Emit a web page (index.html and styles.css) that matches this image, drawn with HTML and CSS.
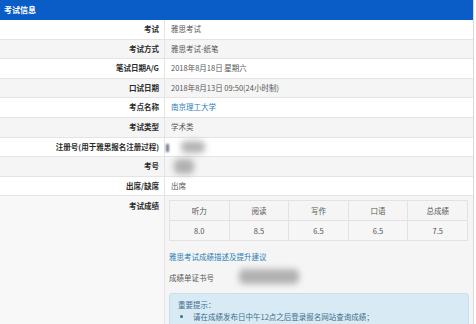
FILE: index.html
```html
<!DOCTYPE html>
<html lang="zh-CN">
<head>
    <meta charset="UTF-8">
    <title>考试信息</title>
    <link rel="stylesheet" href="styles.css">
</head>
<body>
    <div class="panel">
        <div class="panel-header">考试信息</div>

        <div class="row"><div class="label">考试</div><div class="value">雅思考试</div></div>
        <div class="row"><div class="label">考试方式</div><div class="value">雅思考试-纸笔</div></div>
        <div class="row"><div class="label">笔试日期A/G</div><div class="value">2018年8月18日 星期六</div></div>
        <div class="row"><div class="label">口试日期</div><div class="value">2018年8月13日 09:50(24小时制)</div></div>
        <div class="row"><div class="label">考点名称</div><div class="value"><a href="#" class="link">南京理工大学</a></div></div>
        <div class="row"><div class="label">考试类型</div><div class="value">学术类</div></div>
        <div class="row"><div class="label">注册号(用于雅思报名注册过程)</div><div class="value"><span class="mark"></span><span class="blur blur-reg"></span></div></div>
        <div class="row"><div class="label">考号</div><div class="value"><span class="blur blur-id"></span></div></div>
        <div class="row"><div class="label">出席/缺席</div><div class="value">出席</div></div>

        <div class="row row-score">
            <div class="label">考试成绩</div>
            <div class="value">
                <table class="scores">
                    <tr><td>听力</td><td>阅读</td><td>写作</td><td>口语</td><td>总成绩</td></tr>
                    <tr class="nums"><td>8.0</td><td>8.5</td><td>6.5</td><td>6.5</td><td>7.5</td></tr>
                </table>

                <a href="#" class="link desc-link">雅思考试成绩描述及提升建议</a>

                <div class="cert">
                    <span>成绩单证书号</span>
                    <span class="blur blur-cert"></span>
                </div>

                <div class="alert">
                    <div>重要提示：</div>
                    <ul>
                        <li>请在成绩发布日中午12点之后登录报名网站查询成绩；</li>
                    </ul>
                </div>
            </div>
        </div>
    </div>
</body>
</html>
```

FILE: styles.css
```css
/* Global */
body {
    margin: 0;
    font-family: "Noto Sans CJK SC", "Liberation Sans", sans-serif;
    font-size: 7.5px;
    color: #555;
    background-color: #fff;
    overflow: hidden;
    height: 324px;
}

/* Panel */
.panel {
    width: 473px;
    border-right: 1px solid #d8d8d8;
}

.panel-header {
    height: 20px;
    line-height: 20px;
    padding-left: 4px;
    background-color: #0a5cc6;
    color: #fff;
    font-size: 8px;
    font-weight: bold;
}

/* Rows */
.row {
    display: grid;
    grid-template-columns: 165px 1fr;
    height: 19.6px;
    border-bottom: 1px solid #e4e4e4;
    box-sizing: border-box;
    line-height: 18.6px;
}

.row:nth-of-type(odd) {
    background-color: #f5f5f5;
}

.label {
    text-align: right;
    padding-right: 5px;
    font-weight: bold;
    color: #2a2a2a;
    border-right: 1px solid #e4e4e4;
}

.value {
    padding-left: 6px;
    position: relative;
}

.link {
    color: #2b7cb6;
    text-decoration: none;
}

/* Blurred personal data */
.blur {
    position: absolute;
    background-color: #9a9a9a;
    border-radius: 5px;
    filter: blur(3px);
    opacity: 0.75;
}

.blur-reg {
    left: 16px;
    top: 3px;
    width: 24px;
    height: 12px;
}

.mark {
    position: absolute;
    left: 1px;
    top: 6px;
    width: 3px;
    height: 8px;
    background-color: #6a7380;
    filter: blur(1px);
}

.blur-id {
    left: 9px;
    top: 2px;
    width: 20px;
    height: 15px;
}

/* Score row */
.row-score {
    height: auto;
    border-bottom: none;
    line-height: normal;
    background-color: #fff;
}

.row-score .label {
    background-color: #f8f8f8;
    padding-top: 4px;
    line-height: 11px;
}

.row-score .value {
    padding: 4px 4px 0 4px;
}

.scores {
    width: 299px;
    border-collapse: collapse;
    border: 1px solid #dedede;
}

.scores td {
    width: 20%;
    height: 19px;
    padding: 0;
    text-align: center;
    border: 1px solid #e2e2e2;
    color: #555;
}

.scores .nums td {
    background-color: #f6f6f6;
}

.desc-link {
    display: block;
    margin-top: 11px;
    line-height: 10px;
}

.cert {
    position: relative;
    margin-top: 11px;
    line-height: 10px;
}

.blur-cert {
    left: 70px;
    top: -4px;
    width: 60px;
    height: 15px;
}

/* Alert */
.alert {
    margin-top: 10px;
    padding: 5px 8px 12px;
    background-color: #d8ebf5;
    border: 1px solid #c6e1ee;
    border-radius: 3px;
    color: #3f6d8c;
    line-height: 11.5px;
}

.alert ul {
    margin: 0;
    padding-left: 15px;
}
```
